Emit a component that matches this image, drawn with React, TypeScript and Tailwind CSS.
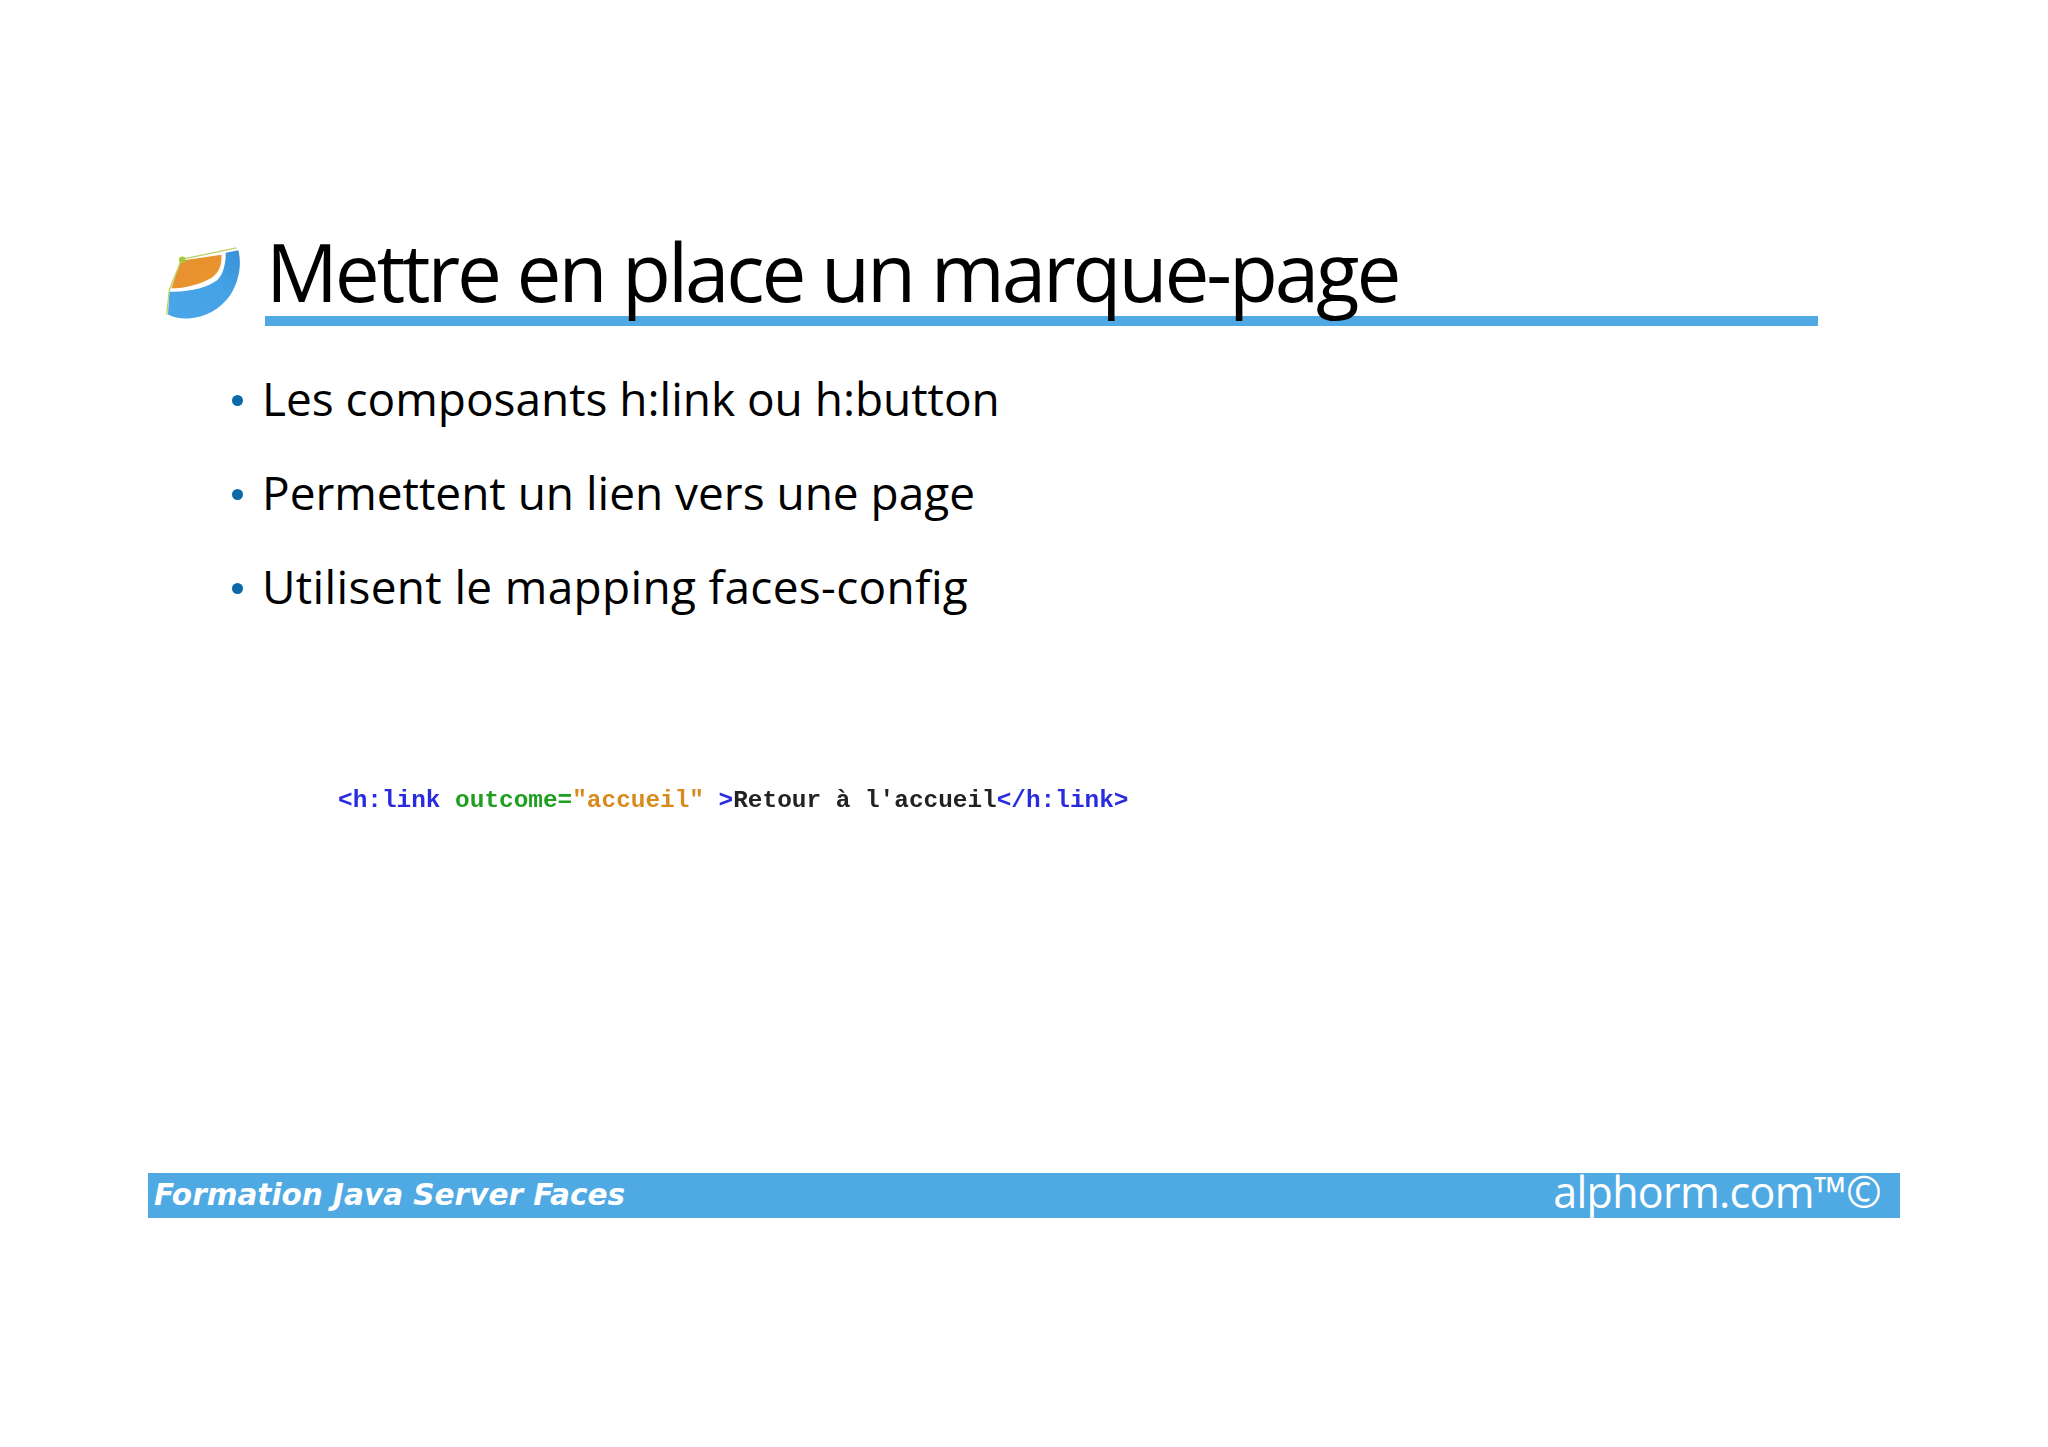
import React from "react";

const bullets = [
  { text: "Les composants h:link ou h:button", cls: "tracking-[-0.03px]" },
  { text: "Permettent un lien vers une page", cls: "tracking-[-0.02px]" },
  { text: "Utilisent le mapping faces-config", cls: "tracking-[0.33px]" },
];

function Logo() {
  return (
    <svg width="78" height="75" viewBox="75 78 235 225" className="shrink-0">
      <defs>
        <linearGradient id="blue" x1="0" y1="1" x2="1" y2="0">
          <stop offset="0" stopColor="#4ba6e8" />
          <stop offset="0.6" stopColor="#45a2e6" />
          <stop offset="1" stopColor="#3a8fd6" />
        </linearGradient>
        <linearGradient id="orange" x1="0" y1="0" x2="1" y2="1">
          <stop offset="0" stopColor="#e88f30" />
          <stop offset="1" stopColor="#e8962e" />
        </linearGradient>
      </defs>
      <path d="M88 215 C150 217 205 202 232 181 C252 162 258 128 258 98 L296 90 C306 130 300 180 272 225 C240 270 195 292 145 296 C120 297 100 292 84 284 Z" fill="url(#blue)" />
      <path d="M94 205 L122 122 L245 104 C247 135 238 156 216 173 C182 193 135 205 94 205 Z" fill="url(#orange)" />
      <path d="M80 285 L88 210 L125 118 L290 83" fill="none" stroke="#b9d36a" strokeWidth="4" />
      <circle cx="127" cy="119" r="10" fill="#a9c93c" />
    </svg>
  );
}

export default function App() {
  return (
    <div className="h-[1447px] w-[2048px] overflow-hidden bg-white pl-[148px] pt-[224px] font-['Open_Sans',sans-serif] text-black">
      {/* Title */}
      <div className="flex h-[102px] w-[1670px] items-end pl-[17px]">
        <div className="mb-[5px] mr-[20px] w-[80px]">
          <Logo />
        </div>
        <div className="flex-1 border-b-[10px] border-[#4faae3]">
          <h1 className="-mb-[4px] h-[92px] -translate-y-[3px] pl-[1px] text-[80px] leading-[92px] tracking-[-3.1px] whitespace-nowrap">Mettre en place un marque-page</h1>
        </div>
      </div>

      {/* Bullets */}
      <ul className="mt-[42px] flex flex-col gap-[34px] pl-[80px]">
        {bullets.map((b) => (
          <li key={b.text} className={`flex h-[60px] items-center gap-[20px] text-[46px] leading-[60px] ${b.cls}`}>
            <span className="ml-[4px] mt-[5px] h-[11px] w-[11px] rounded-full bg-[#0a69a8]" />
            <span className="-ml-[1px]">{b.text}</span>
          </li>
        ))}
      </ul>

      {/* Code */}
      <pre className="mt-[171px] pl-[190px] font-['Liberation_Mono',monospace] text-[24.4px] leading-[28px] font-bold text-[#222] blur-[0.4px]">
        <span className="text-[#2a2ae0]">&lt;h:link </span>
        <span className="text-[#1f9e1f]">outcome=</span>
        <span className="text-[#d98a1f]">"accueil" </span>
        <span className="text-[#2a2ae0]">&gt;</span>
        Retour à l'accueil
        <span className="text-[#2a2ae0]">&lt;/h:link&gt;</span>
      </pre>

      {/* Footer */}
      <div className="mt-[358px] flex h-[45px] w-[1752px] items-center justify-between bg-[#4faae3] pl-[6px] pr-[19px] text-white">
        <span className="font-['DejaVu_Sans',sans-serif] text-[29.5px] font-bold italic">Formation Java Server Faces</span>
        <span className="-mt-[8px] text-[43px] leading-[45px] tracking-[-0.7px]">alphorm.com™©</span>
      </div>
    </div>
  );
}
